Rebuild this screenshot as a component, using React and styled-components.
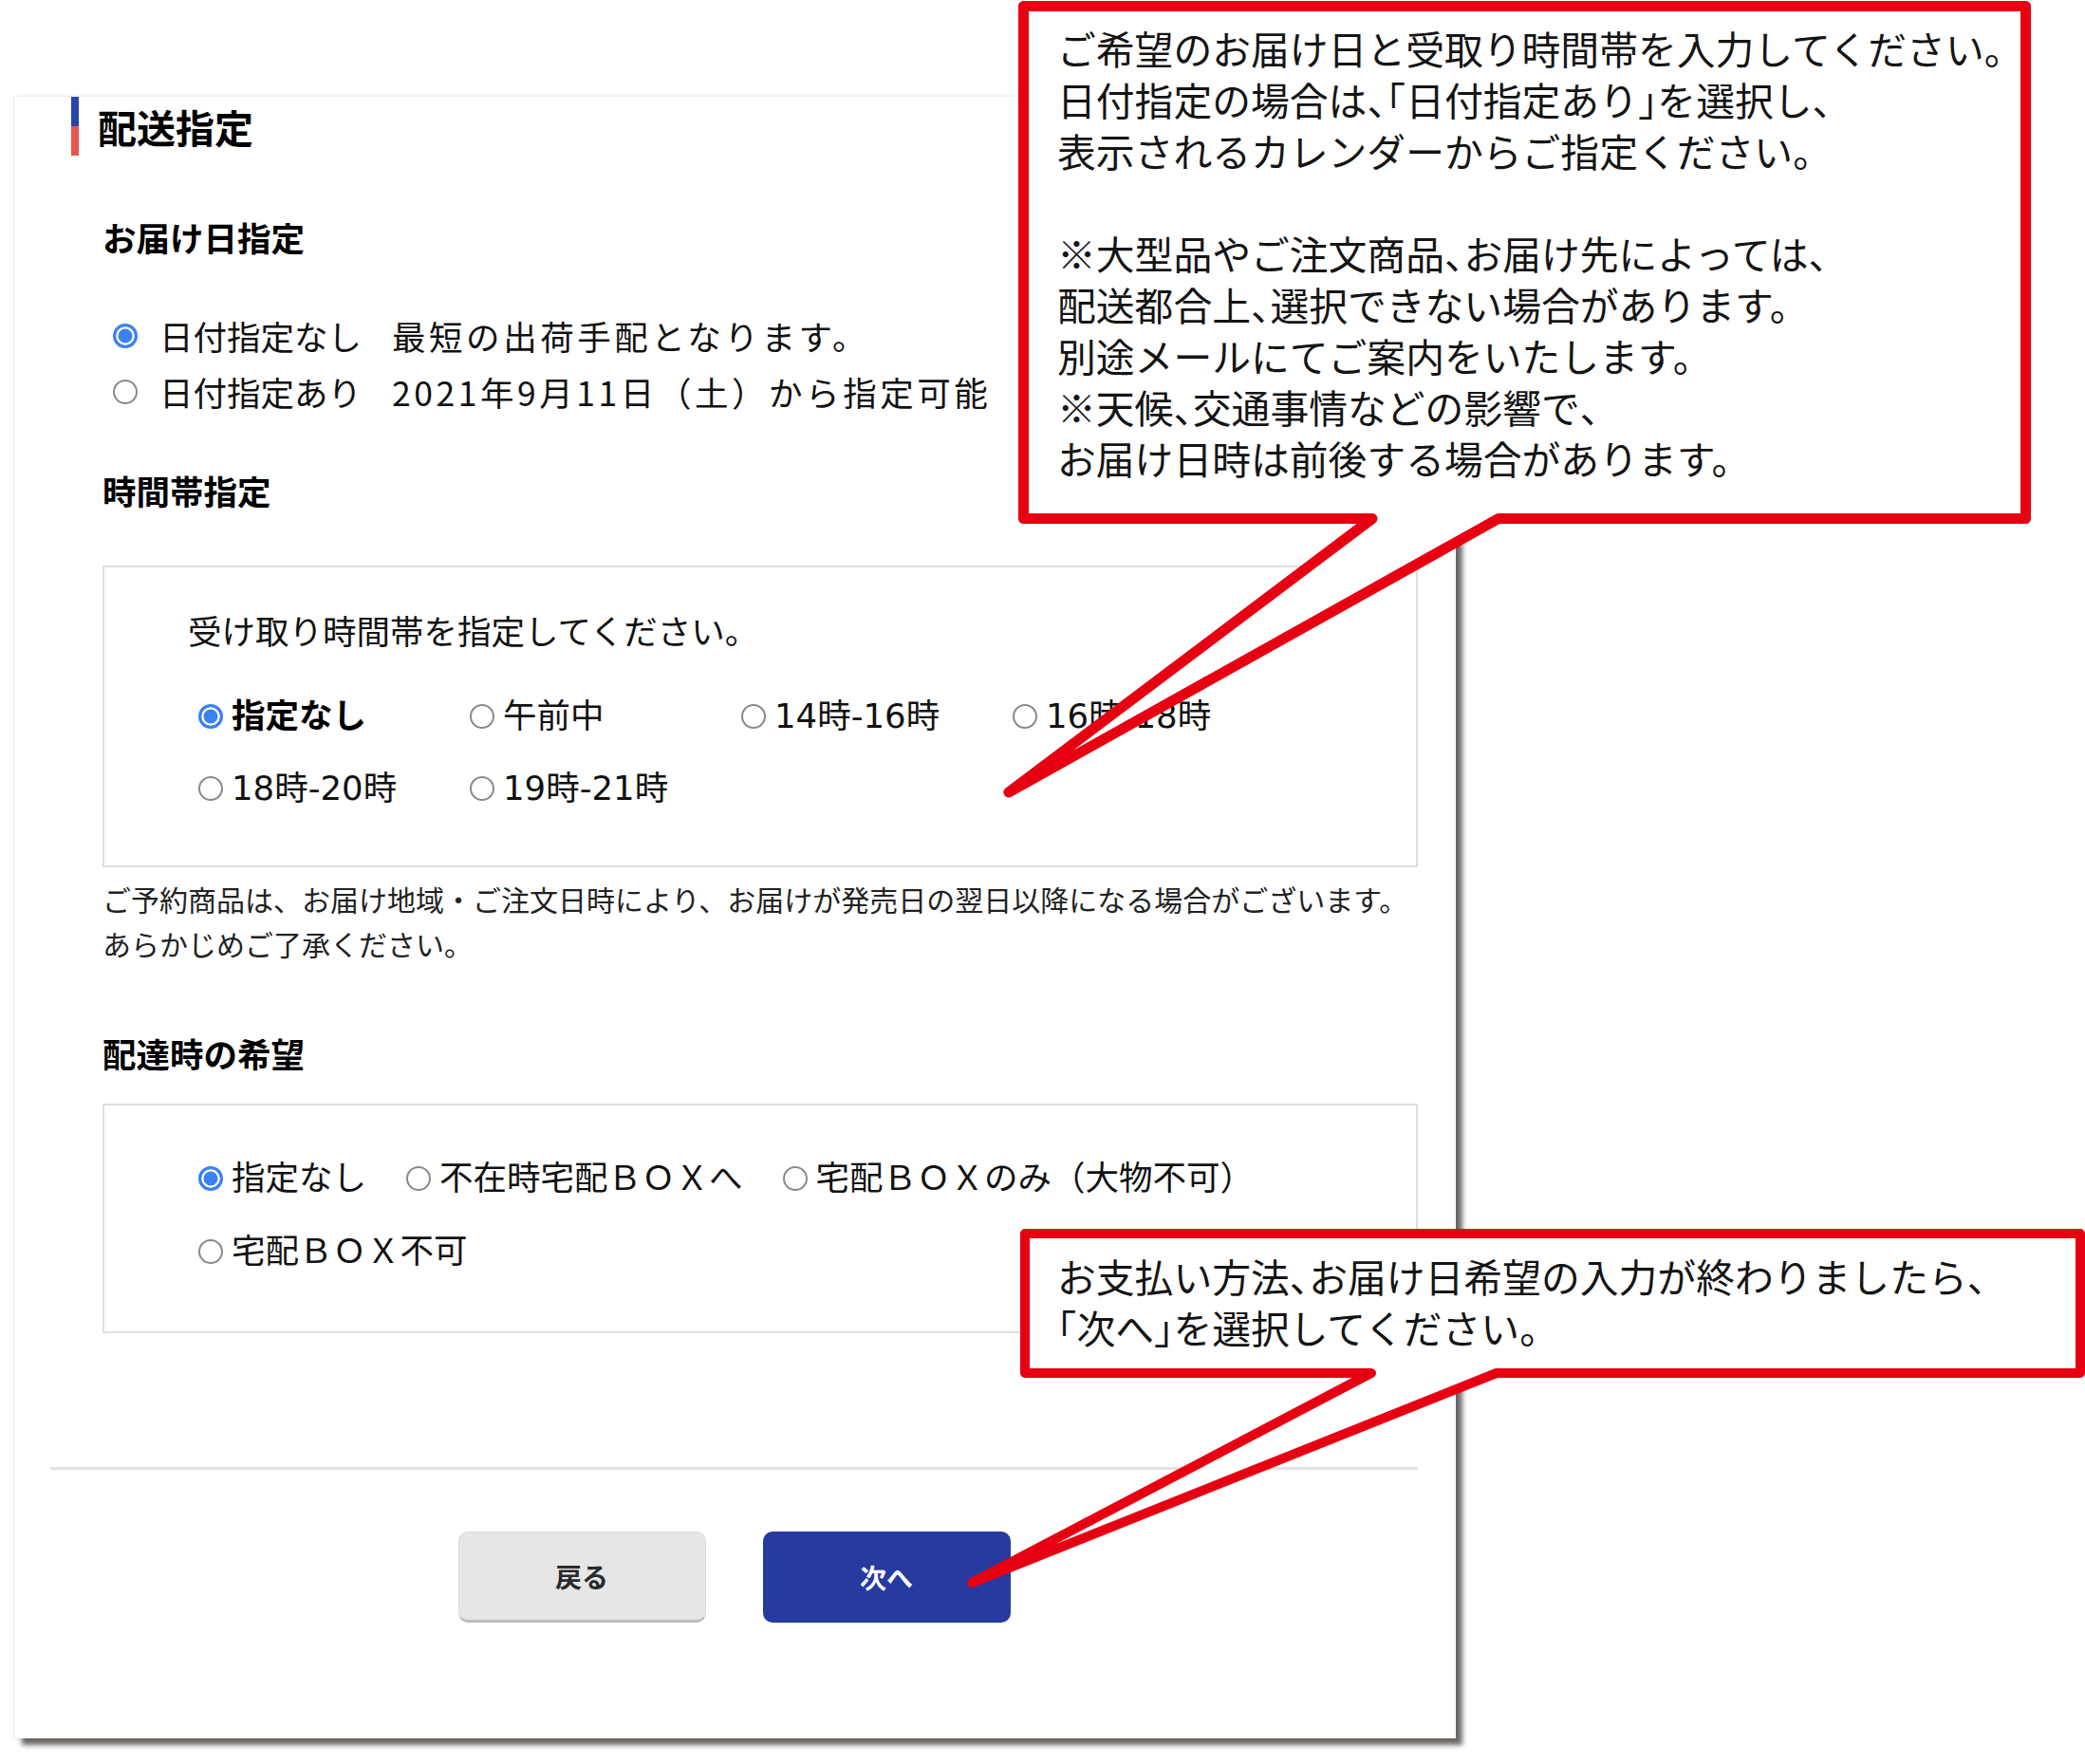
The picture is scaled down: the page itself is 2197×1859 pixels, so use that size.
import React from "react";
import styled, { createGlobalStyle } from "styled-components";

const GlobalStyle = createGlobalStyle`
  html, body { margin: 0; padding: 0; background: #fff; }
  body { font-family: "Noto Sans CJK JP", "Noto Sans", sans-serif; color: #111; }
  * { box-sizing: border-box; }
`;

const Page = styled.div`
  position: relative;
  width: 2197px;
  height: 1859px;
  overflow: hidden;
  background: #fff;
  padding-top: 71px;
`;

const Card = styled.section`
  margin-left: 16px;
  width: 1518px;
  background: #fff;
  padding: 0 40px 122px 37px;
  box-shadow: 0 0 4px rgba(0, 0, 0, 0.14), 7px 7px 5px rgba(50, 44, 40, 0.7);
`;

const TitleRow = styled.div`
  display: flex;
  align-items: center;
  margin: 31px 0 0 22px;
  height: 62px;
`;

const AccentBar = styled.span`
  width: 8px;
  height: 62px;
  background: linear-gradient(#2b44ad 0 50%, #ea564c 50% 100%);
`;

const Title = styled.h1`
  margin: 0 0 0 20px;
  font-size: 41px;
  line-height: 62px;
  font-weight: 700;
  color: #000;
`;

const Content = styled.div`
  margin-left: 55px;
`;

const Heading = styled.h2`
  margin: ${(p) => p.$mt}px 0 0;
  font-size: 35.5px;
  line-height: 52px;
  font-weight: 700;
  color: #000;
`;

const DateList = styled.div`
  margin-top: 48px;
  display: flex;
  flex-direction: column;
`;

const DateRow = styled.label`
  display: flex;
  align-items: center;
  height: 59px;
  font-size: 35.5px;
  line-height: 59px;
  color: #111;
  white-space: nowrap;
`;

const Radio = styled.span`
  flex: none;
  width: 26px;
  height: 26px;
  border-radius: 50%;
  margin-left: ${(p) => p.$ml || 0}px;
  margin-right: ${(p) => p.$gap}px;
  border: ${(p) => (p.$checked ? "3px solid #3b80f5" : "2px solid #8a8a8a")};
  background: ${(p) => (p.$checked ? "#3b80f5" : "#fff")};
  box-shadow: ${(p) => (p.$checked ? "inset 0 0 0 2.5px #fff" : "none")};
`;

const DateLabel = styled.span`
  width: 245px;
`;

const DateValue = styled.span`
  letter-spacing: 0.1em;
`;

const Box = styled.div`
  margin-top: ${(p) => p.$mt}px;
  border: 2px solid #dedede;
  background: #fff;
  padding: ${(p) => p.$pad};
`;

const Instruction = styled.p`
  margin: 0;
  font-size: 35.5px;
  line-height: 51px;
  color: #111;
`;

const TimeGrid = styled.div`
  margin: 40px 0 0 11px;
  display: grid;
  grid-template-columns: repeat(4, 286px);
  row-gap: 24px;
`;

const Option = styled.label`
  display: flex;
  align-items: center;
  height: 52px;
  font-family: "DejaVu Sans", "Noto Sans CJK JP", sans-serif;
  font-size: 35.5px;
  line-height: 52px;
  white-space: nowrap;
  font-weight: ${(p) => (p.$bold ? 700 : 400)};
  color: ${(p) => (p.$bold ? "#000" : "#111")};
`;

const OptionWrap = styled.div`
  display: flex;
  flex-wrap: wrap;
  column-gap: 42px;
  row-gap: 25px;
`;

const Note = styled.p`
  margin: 10px 0 0;
  font-size: 30px;
  line-height: 47px;
  color: #222;
  white-space: nowrap;
`;

const Divider = styled.hr`
  margin: 141px 0 0;
  border: none;
  height: 3px;
  background: #e2e2e2;
`;

const ButtonRow = styled.div`
  margin-top: 65px;
  display: flex;
  justify-content: center;
  gap: 60px;
`;

const Button = styled.button`
  width: 261px;
  height: 96px;
  border-radius: 10px;
  font-family: inherit;
  font-size: 28px;
  font-weight: 700;
  cursor: pointer;
  background: ${(p) => (p.$primary ? "#263a9f" : "#e6e6e6")};
  color: ${(p) => (p.$primary ? "#fff" : "#2a2a2a")};
  border: ${(p) => (p.$primary ? "none" : "1px solid #dadada")};
  border-bottom: ${(p) => (p.$primary ? "none" : "3px solid #bcbcbc")};
`;

const Callout = styled.div`
  position: absolute;
  left: ${(p) => p.$left}px;
  top: ${(p) => p.$top}px;
  width: ${(p) => p.$w}px;
  height: ${(p) => p.$h}px;
`;

const CalloutShape = styled.svg`
  position: absolute;
  left: 0;
  top: 0;
  overflow: visible;
`;

const CalloutText = styled.div`
  position: relative;
  padding: ${(p) => p.$pt}px 0 0 ${(p) => p.$pl}px;
  font-size: 40.8px;
  line-height: 54px;
  color: #141414;
  white-space: nowrap;
`;

const Blank = styled.div`
  height: 54px;
`;

const P = styled.span`
  font-feature-settings: "halt" 1;
`;

const timeOptions = [
  { label: "指定なし", checked: true },
  { label: "午前中" },
  { label: "14時-16時" },
  { label: "16時-18時" },
  { label: "18時-20時" },
  { label: "19時-21時" },
];

const deliveryOptions = [
  { label: "指定なし", checked: true },
  { label: "不在時宅配ＢＯＸへ" },
  { label: "宅配ＢＯＸのみ（大物不可）" },
  { label: "宅配ＢＯＸ不可" },
];

export default function App() {
  return (
    <Page>
      <GlobalStyle />
      <Card>
        <TitleRow>
          <AccentBar />
          <Title>配送指定</Title>
        </TitleRow>
        <Content>
          <Heading $mt={60}>お届け日指定</Heading>
          <DateList>
            <DateRow>
              <Radio $checked $ml={11} $gap={23} />
              <DateLabel>日付指定なし</DateLabel>
              <DateValue>最短の出荷手配となります。</DateValue>
            </DateRow>
            <DateRow>
              <Radio $ml={11} $gap={23} />
              <DateLabel>日付指定あり</DateLabel>
              <DateValue>2021年9月11日（土）から指定可能</DateValue>
            </DateRow>
          </DateList>

          <Heading $mt={49}>時間帯指定</Heading>
          <Box $mt={53} $pad="40px 0 55px 88px">
            <Instruction>受け取り時間帯を指定してください。</Instruction>
            <TimeGrid>
              {timeOptions.map((o) => (
                <Option key={o.label} $bold={o.checked}>
                  <Radio $checked={o.checked} $gap={9} />
                  {o.label}
                </Option>
              ))}
            </TimeGrid>
          </Box>
          <Note>
            ご予約商品は、お届け地域・ご注文日時により、お届けが発売日の翌日以降になる場合がございます。
            <br />
            あらかじめご了承ください。
          </Note>

          <Heading $mt={66}>配達時の希望</Heading>
          <Box $mt={27} $pad="51px 40px 58px 99px">
            <OptionWrap>
              {deliveryOptions.map((o) => (
                <Option key={o.label}>
                  <Radio $checked={o.checked} $gap={9} />
                  {o.label}
                </Option>
              ))}
            </OptionWrap>
          </Box>
        </Content>
        <Divider />
        <ButtonRow>
          <Button type="button">戻る</Button>
          <Button type="button" $primary>
            次へ
          </Button>
        </ButtonRow>
      </Card>

      <Callout $left={1073} $top={1} $w={1067} $h={551}>
        <CalloutShape width="1067" height="551">
          <path
            d="M5.5 5.5 H1061.5 V545.5 H506 L-10 834 L373 545.5 H5.5 Z"
            fill="#fff"
            stroke="#e60012"
            strokeWidth="11"
            strokeLinejoin="round"
          />
        </CalloutShape>
        <CalloutText $pt={23} $pl={41}>
          <div>ご希望のお届け日と受取り時間帯を入力してください。</div>
          <div>
            日付指定の場合は<P>、「</P>日付指定あり<P>」</P>を選択し<P>、</P>
          </div>
          <div>表示されるカレンダーからご指定ください。</div>
          <Blank />
          <div>
            ※大型品やご注文商品<P>、</P>お届け先によっては<P>、</P>
          </div>
          <div>
            配送都合上<P>、</P>選択できない場合があります。
          </div>
          <div>別途メールにてご案内をいたします。</div>
          <div>
            ※天候<P>、</P>交通事情などの影響で<P>、</P>
          </div>
          <div>お届け日時は前後する場合があります。</div>
        </CalloutText>
      </Callout>

      <Callout $left={1075} $top={1295} $w={1122} $h={157}>
        <CalloutShape width="1122" height="157">
          <path
            d="M5 5 H1117 V152 H502 L-51 373 L370 152 H5 Z"
            fill="#fff"
            stroke="#e60012"
            strokeWidth="10"
            strokeLinejoin="round"
          />
        </CalloutShape>
        <CalloutText $pt={23} $pl={39}>
          <div>
            お支払い方法<P>、</P>お届け日希望の入力が終わりましたら<P>、</P>
          </div>
          <div>
            <P>「</P>次へ<P>」</P>を選択してください。
          </div>
        </CalloutText>
      </Callout>
    </Page>
  );
}
